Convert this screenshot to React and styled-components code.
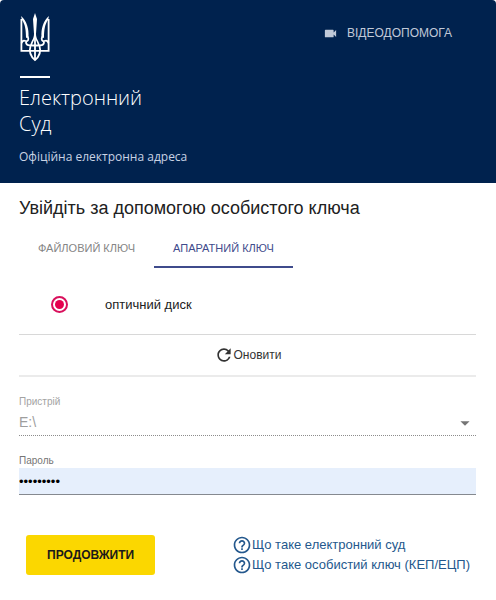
import { useState } from 'react';
import styled, { createGlobalStyle } from 'styled-components';
import {
  MdArrowDropDown, MdHelpOutline, MdRefresh, MdVideocam,
} from 'react-icons/md';

const GlobalStyle = createGlobalStyle`
  * {
    box-sizing: border-box;
  }
  body {
    margin: 0;
    background-color: #fff;
    color: #212121;
    font-family: 'Liberation Sans', Arial, sans-serif;
  }
`;

const Card = styled.div`
  background-color: #fff;
  border-radius: 4px;
  overflow: hidden;
`;

const Header = styled.header`
  align-items: flex-start;
  background-color: #00224e;
  color: #fff;
  display: flex;
  justify-content: space-between;
  padding: 12px 44px 18px 19px;
`;

const Brand = styled.div`
  font-family: 'Open Sans', 'Noto Sans', sans-serif;
  svg {
    display: block;
    height: 50px;
    margin-left: 1px;
    width: 30px;
  }
`;

const BrandLine = styled.div`
  background-color: #fff;
  height: 2px;
  margin: 14px 0 7px 1px;
  width: 30px;
`;

const BrandTitle = styled.h1`
  font-size: 20px;
  font-weight: 300;
  line-height: 26px;
  margin: 0;
`;

const BrandSubtitle = styled.p`
  color: #c9d3e4;
  font-size: 12px;
  line-height: 16px;
  margin: 12px 0 0;
`;

const VideoLink = styled.a`
  align-items: center;
  color: #c0c9d8;
  display: flex;
  font-size: 12px;
  gap: 9px;
  line-height: 16px;
  margin-top: 13px;
  text-decoration: none;
`;

const Content = styled.main`
  padding: 12px 20px 24px 19px;
`;

const Title = styled.h2`
  font-size: 18px;
  font-weight: 400;
  line-height: 26px;
  margin: 0;
`;

const Tabs = styled.div`
  display: flex;
  margin-top: 8px;
`;

const Tab = styled.button`
  background: none;
  border: 0;
  border-bottom: 2px solid ${(props) => (props.$active ? '#3f4b8c' : 'transparent')};
  color: ${(props) => (props.$active ? '#3f4b8c' : '#858585')};
  cursor: pointer;
  font-family: inherit;
  font-size: 11px;
  height: 39px;
  padding: 0 19px;
`;

const KeyOption = styled.label`
  align-items: center;
  border-bottom: 1px solid #d8d8d8;
  cursor: pointer;
  display: flex;
  font-size: 13px;
  gap: 37px;
  height: 67px;
  padding: 6px 0 0 32px;
`;

const Radio = styled.input`
  appearance: none;
  border: 2px solid #d9105c;
  border-radius: 50%;
  height: 17px;
  margin: 0;
  padding: 2px;
  width: 17px;
  &:checked::before {
    background-color: #e5004f;
    border-radius: 50%;
    content: '';
    display: block;
    height: 9px;
    width: 9px;
  }
`;

const RefreshButton = styled.button`
  align-items: center;
  background: none;
  border: 0;
  border-bottom: 2px solid #ebebeb;
  color: #333;
  cursor: pointer;
  display: flex;
  font-family: inherit;
  font-size: 12px;
  height: 42px;
  justify-content: center;
  padding: 0;
  width: 100%;
`;

const Field = styled.div`
  color: ${(props) => (props.$muted ? '#a3a3a3' : '#757575')};
  display: flex;
  flex-direction: column;
  margin-top: 18px;
  position: relative;
  svg {
    bottom: 2px;
    color: #757575;
    pointer-events: none;
    position: absolute;
    right: 0;
  }
`;

const Label = styled.label`
  font-size: 10px;
  line-height: 14px;
`;

const Select = styled.select`
  appearance: none;
  background: none;
  border: 0;
  border-bottom: 1px dotted #8c8c8c;
  border-radius: 0;
  color: #9e9e9e;
  font-family: inherit;
  font-size: 14px;
  height: 27px;
  opacity: 1;
  padding: 0;
  width: 100%;
`;

const PasswordInput = styled.input`
  background-color: #e6effc;
  border: 0;
  border-bottom: 1px solid #85898f;
  color: #000;
  font-family: inherit;
  font-size: 13px;
  height: 27px;
  outline: 0;
  padding: 0;
  width: 100%;
`;

const Footer = styled.div`
  align-items: flex-start;
  display: flex;
  justify-content: space-between;
  margin-top: 40px;
  padding: 0 6px 0 7px;
`;

const SubmitButton = styled.button`
  background-color: #fbd700;
  border: 0;
  border-radius: 3px;
  color: #1a1a1a;
  cursor: pointer;
  font-family: inherit;
  font-size: 12px;
  font-weight: 700;
  height: 40px;
  padding: 0 21px;
`;

const HelpLinks = styled.nav`
  display: flex;
  flex-direction: column;
`;

const HelpLink = styled.a`
  align-items: center;
  color: #24588d;
  display: flex;
  font-size: 13px;
  line-height: 20px;
  text-decoration: none;
`;

const Trident = () => (
  <svg viewBox="0 0 30 50" fill="none" stroke="#fff" strokeWidth="1.8" aria-hidden="true">
    <path d="M15 1 L17 7 L16 22 C16 27 19 29 20 34 L18 34 C18 31 16 29 15 26 C14 29 12 31 12 34 L10 34 C11 29 14 27 14 22 L13 7 Z" fill="#fff" stroke="none" />
    <path d="M1.4 7 V38.8 H10 M20 38.8 H28.6 V7" />
    <path d="M1 4 C7 9 9 17 8.5 25 L6 26 C6 18 5 12 2 8 Z" fill="#fff" stroke="none" />
    <path d="M29 4 C23 9 21 17 21.5 25 L24 26 C24 18 25 12 28 8 Z" fill="#fff" stroke="none" />
    <path d="M7.2 24 C9.5 27 8 30 5.5 29 C3.5 28 2.5 29 1.5 31" />
    <path d="M22.8 24 C20.5 27 22 30 24.5 29 C26.5 28 27.5 29 28.5 31" />
    <path d="M6 30 C6 34 10 33.5 15 33.5 C20 33.5 24 34 24 30" />
    <path d="M10.5 34 C9 39 10 44 15 48 C20 44 21 39 19.5 34" />
    <path d="M10 38.8 H20" />
    <path d="M15 26 V48" />
  </svg>
);

const tabs = ['ФАЙЛОВИЙ КЛЮЧ', 'АПАРАТНИЙ КЛЮЧ'];

const helpItems = ['Що таке електронний суд', 'Що таке особистий ключ (КЕП/ЕЦП)'];

const App = () => {
  const [activeTab, setActiveTab] = useState(1);
  const [password, setPassword] = useState('password1');

  return (
    <Card>
      <GlobalStyle />
      <Header>
        <Brand>
          <Trident />
          <BrandLine />
          <BrandTitle>
            Електронний
            <br />
            Суд
          </BrandTitle>
          <BrandSubtitle>Офіційна електронна адреса</BrandSubtitle>
        </Brand>
        <VideoLink href="#video">
          <MdVideocam size={15} />
          ВІДЕОДОПОМОГА
        </VideoLink>
      </Header>
      <Content>
        <Title>Увійдіть за допомогою особистого ключа</Title>
        <Tabs role="tablist">
          {tabs.map((tab, index) => (
            <Tab
              key={tab}
              type="button"
              role="tab"
              aria-selected={index === activeTab}
              $active={index === activeTab}
              onClick={() => setActiveTab(index)}
            >
              {tab}
            </Tab>
          ))}
        </Tabs>
        <KeyOption>
          <Radio type="radio" name="key" defaultChecked />
          оптичний диск
        </KeyOption>
        <RefreshButton type="button">
          <MdRefresh size={20} />
          Оновити
        </RefreshButton>
        <Field $muted>
          <Label htmlFor="device">Пристрій</Label>
          <Select id="device" disabled>
            <option>E:\</option>
          </Select>
          <MdArrowDropDown size={22} />
        </Field>
        <Field>
          <Label htmlFor="password">Пароль</Label>
          <PasswordInput
            id="password"
            type="password"
            value={password}
            onChange={(e) => setPassword(e.target.value)}
          />
        </Field>
        <Footer>
          <SubmitButton type="button">ПРОДОВЖИТИ</SubmitButton>
          <HelpLinks>
            {helpItems.map((item) => (
              <HelpLink key={item} href="#help">
                <MdHelpOutline size={20} />
                {item}
              </HelpLink>
            ))}
          </HelpLinks>
        </Footer>
      </Content>
    </Card>
  );
};

export default App;
